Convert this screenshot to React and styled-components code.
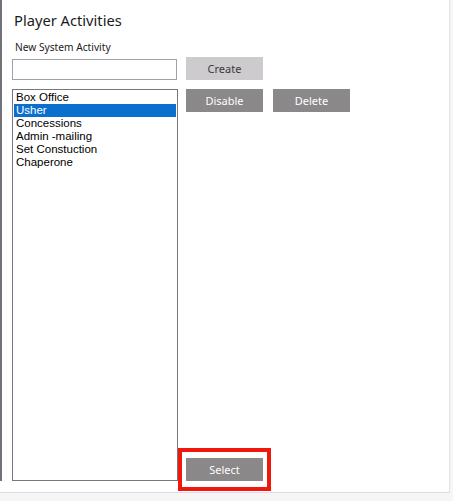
import styled, { createGlobalStyle } from "styled-components";

const GlobalStyle = createGlobalStyle`
  body {
    margin: 0;
    background: #f7f5f8;
    font-family: "Noto Sans", "Open Sans", sans-serif;
  }
`;

const Panel = styled.div`
  box-sizing: border-box;
  width: 450px;
  height: 493px;
  background: #fff;
  border-right: 1px solid #e4e0e7;
  border-bottom: 1px solid #dedbe1;
`;

const Content = styled.div`
  box-sizing: border-box;
  height: 481px;
  border-left: 2px solid #727079;
  padding: 9px 0 0 10px;
  display: flex;
  flex-direction: column;
`;

const Title = styled.h1`
  margin: 0 0 0 2px;
  font-size: 14.7px;
  font-weight: 400;
  line-height: 22px;
  color: #1b1b1b;
`;

const Label = styled.div`
  margin: 9px 0 0 3px;
  font-size: 10.2px;
  line-height: 15px;
  color: #1b1b1b;
`;

const TopRow = styled.div`
  display: flex;
  align-items: flex-start;
  gap: 9px;
  margin-top: 2px;
`;

const TextInput = styled.input`
  box-sizing: border-box;
  width: 165px;
  height: 21px;
  margin-top: 2px;
  border: 1px solid #a3a1a6;
  padding: 0 3px;
  font: inherit;
  font-size: 12px;
  outline: none;
`;

const Button = styled.button`
  box-sizing: border-box;
  width: 77px;
  height: 23px;
  border: none;
  padding: 0;
  font-family: "Noto Sans", "Open Sans", sans-serif;
  font-size: 11px;
  background: ${(p) => (p.$light ? "#cdcbcd" : "#8a8889")};
  color: ${(p) => (p.$light ? "#3a3a3a" : "#fff")};
  cursor: pointer;
`;

const MainRow = styled.div`
  display: flex;
  gap: 8px;
  margin-top: 9px;
  flex: 1;
  min-height: 0;
`;

const ListBox = styled.ul`
  box-sizing: border-box;
  width: 166px;
  margin: 0;
  padding: 1px;
  list-style: none;
  border: 1px solid #77757d;
`;

const Item = styled.li`
  height: 13px;
  line-height: 13px;
  padding-left: 2px;
  font-family: "Liberation Sans", Arial, sans-serif;
  font-size: 11.5px;
  color: ${(p) => (p.$selected ? "#fff" : "#000")};
  background: ${(p) => (p.$selected ? "#0b6fcd" : "transparent")};
  white-space: nowrap;
`;

const Side = styled.div`
  display: flex;
  flex-direction: column;
  justify-content: space-between;
`;

const ButtonRow = styled.div`
  display: flex;
  gap: 10px;
`;

const Highlight = styled.div`
  position: relative;
  width: 77px;
`;

const RedBox = styled.div`
  position: absolute;
  left: -8px;
  right: -8px;
  top: -9px;
  bottom: -10px;
  border: 4px solid #f0180c;
  pointer-events: none;
`;

const activities = [
  "Box Office",
  "Usher",
  "Concessions",
  "Admin -mailing",
  "Set Constuction",
  "Chaperone",
];

export default function App() {
  return (
    <>
      <GlobalStyle />
      <Panel>
        <Content>
          <Title>Player Activities</Title>
          <Label>New System Activity</Label>
          <TopRow>
            <TextInput type="text" />
            <Button $light>Create</Button>
          </TopRow>
          <MainRow>
            <ListBox>
              {activities.map((a) => (
                <Item key={a} $selected={a === "Usher"}>
                  {a}
                </Item>
              ))}
            </ListBox>
            <Side>
              <ButtonRow>
                <Button>Disable</Button>
                <Button>Delete</Button>
              </ButtonRow>
              <Highlight>
                <Button>Select</Button>
                <RedBox />
              </Highlight>
            </Side>
          </MainRow>
        </Content>
      </Panel>
    </>
  );
}
